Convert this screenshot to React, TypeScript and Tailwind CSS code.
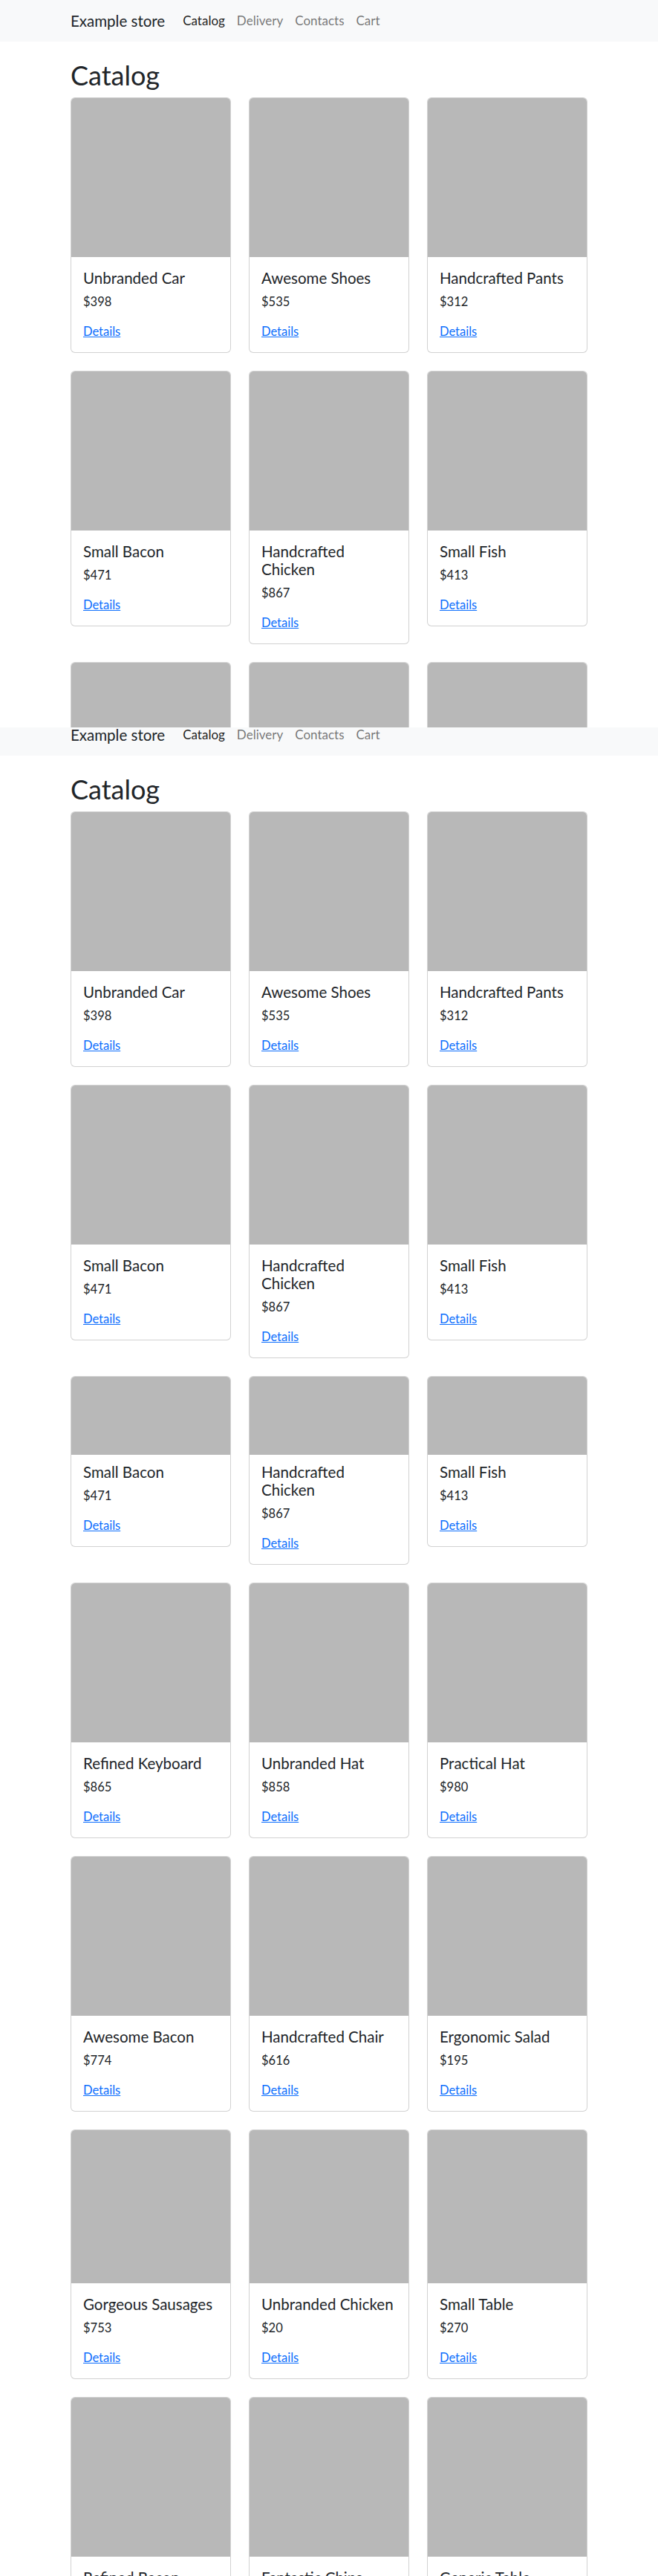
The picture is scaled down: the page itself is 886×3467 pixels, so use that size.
import React from "react";

type Item = { name: React.ReactNode; price: string };
type Row = { items: Item[]; imgH?: number; bodyPt?: number };

const r1: Item[] = [
  { name: "Unbranded Car", price: "$398" },
  { name: "Awesome Shoes", price: "$535" },
  { name: "Handcrafted Pants", price: "$312" },
];
const r2: Item[] = [
  { name: "Small Bacon", price: "$471" },
  { name: <>Handcrafted<br />Chicken</>, price: "$867" },
  { name: "Small Fish", price: "$413" },
];
const r4: Item[] = [
  { name: "Refined Keyboard", price: "$865" },
  { name: "Unbranded Hat", price: "$858" },
  { name: "Practical Hat", price: "$980" },
];
const r5: Item[] = [
  { name: "Awesome Bacon", price: "$774" },
  { name: "Handcrafted Chair", price: "$616" },
  { name: "Ergonomic Salad", price: "$195" },
];
const r6: Item[] = [
  { name: "Gorgeous Sausages", price: "$753" },
  { name: "Unbranded Chicken", price: "$20" },
  { name: "Small Table", price: "$270" },
];
const r7: Item[] = [
  { name: "Refined Bacon", price: "$100" },
  { name: "Fantastic Chips", price: "$100" },
  { name: "Generic Table", price: "$100" },
];

function Navbar() {
  return (
    <nav className="bg-[#f8f9fa] py-2">
      <div className="mx-auto w-[720px] px-3 flex items-center">
        <span className="text-[20.5px] leading-[30px] py-[5px] mr-4 text-[#212529]">Example store</span>
        <div className="flex">
          <span className="px-2 py-2 text-[17px] leading-6 text-[rgba(0,0,0,0.9)]">Catalog</span>
          <span className="px-2 py-2 text-[17px] leading-6 text-[rgba(0,0,0,0.55)]">Delivery</span>
          <span className="px-2 py-2 text-[17px] leading-6 text-[rgba(0,0,0,0.55)]">Contacts</span>
          <span className="px-2 py-2 text-[17px] leading-6 text-[rgba(0,0,0,0.55)]">Cart</span>
        </div>
      </div>
    </nav>
  );
}

function Card({ item, imgH, bodyPt }: { item: Item; imgH: number; bodyPt: number }) {
  return (
    <div className="w-[216px] border border-[rgba(0,0,0,0.175)] rounded-[6px] overflow-hidden bg-white">
      <div className="bg-[#b8b8b8] w-full" style={{ height: imgH }} />
      <div className="px-4 pb-4" style={{ paddingTop: bodyPt }}>
        <h5 className="text-[20.5px] leading-6 font-normal mb-2 text-[#212529] whitespace-nowrap">{item.name}</h5>
        <p className="text-[16.5px] leading-6 mb-4 text-[#212529]">{item.price}</p>
        <a className="text-[16.5px] leading-6 text-[#0d6efd] underline">Details</a>
      </div>
    </div>
  );
}

function Page({ rows }: { rows: Row[] }) {
  return (
    <div>
      <Navbar />
      <div className="mx-auto w-[720px] px-3">
        <h1 className="mt-6 mb-2 text-[36px] leading-[43px] font-normal text-[#212529]">Catalog</h1>
        <div className="flex flex-col gap-6">
          {rows.map((row, i) => (
            <div key={i} className="flex items-start gap-6">
              {row.items.map((it, j) => (
                <Card key={j} item={it} imgH={row.imgH ?? 214} bodyPt={row.bodyPt ?? 16} />
              ))}
            </div>
          ))}
        </div>
      </div>
    </div>
  );
}

export default function App() {
  return (
    <div className="w-[886px] h-[3467px] overflow-hidden bg-white text-[#212529] [font-family:Lato,sans-serif]">
      <div className="h-[979px] overflow-hidden">
        <Page rows={[{ items: r1 }, { items: r2 }, { items: r4 }]} />
      </div>
      <div className="overflow-hidden">
        <div className="-mt-[18px]">
          <Page
            rows={[
              { items: r1 },
              { items: r2 },
              { items: r2, imgH: 105, bodyPt: 11 },
              { items: r4 },
              { items: r5 },
              { items: r6, imgH: 206 },
              { items: r7 },
            ]}
          />
        </div>
      </div>
    </div>
  );
}
